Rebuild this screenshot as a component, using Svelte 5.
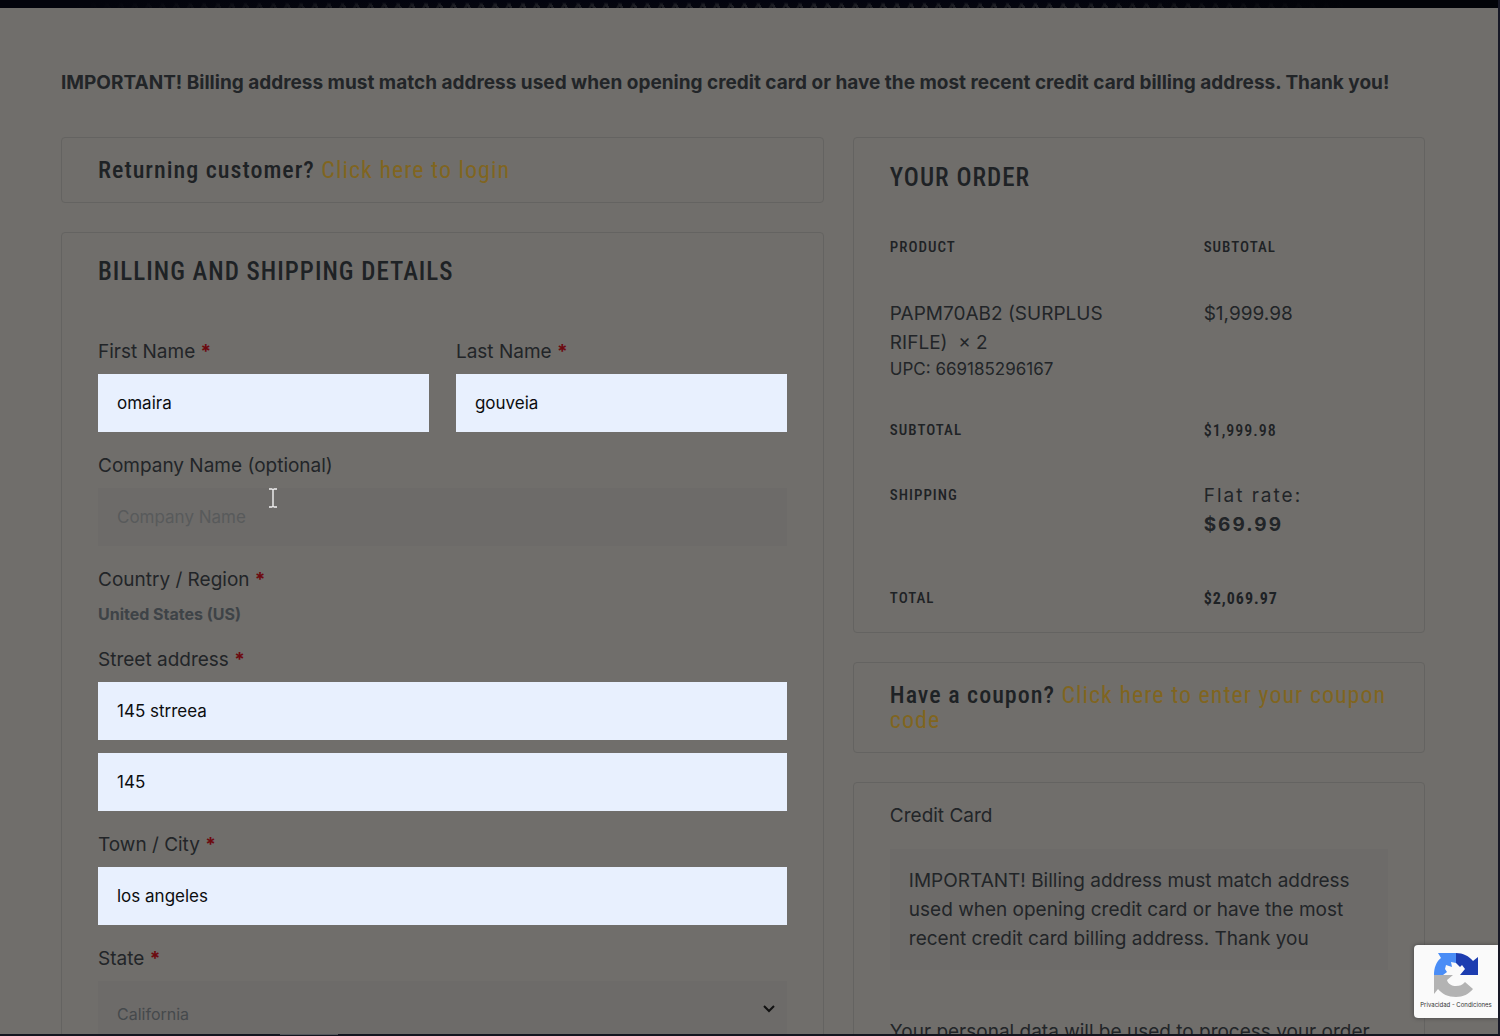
<script>
  let form = $state({
    firstName: "omaira",
    lastName: "gouveia",
    company: "",
    street: "145 strreea",
    street2: "145",
    city: "los angeles",
    region: "California",
  });

  const regions = ["Arizona", "California", "Nevada", "Oregon"];
</script>

<svelte:head>
  <title>Checkout</title>
</svelte:head>

<div class="window">
  <div class="banner"></div>

  <main>
    <p class="notice">
      IMPORTANT! Billing address must match address used when opening credit card or have the most recent credit card billing address. Thank you!
    </p>

    <div class="columns">
      <div class="column">
        <section class="card prompt">
          <h4>Returning customer? <a href="#login">Click here to login</a></h4>
        </section>

        <section class="card billing">
          <h3>Billing and Shipping details</h3>
          <form>
            <div class="pair">
              <div class="field">
                <label for="first">First Name <b>*</b></label>
                <input id="first" type="text" class="filled" bind:value={form.firstName} />
              </div>
              <div class="field">
                <label for="last">Last Name <b>*</b></label>
                <input id="last" type="text" class="filled" bind:value={form.lastName} />
              </div>
            </div>
            <div class="field">
              <label for="company">Company Name (optional)</label>
              <input id="company" type="text" placeholder="Company Name" bind:value={form.company} />
              <svg class="caret" viewBox="0 0 10 20" aria-hidden="true">
                <path d="M1 1h3.5M5.5 1H9M5 1v18M1 19h3.5M5.5 19H9" />
              </svg>
            </div>
            <div class="field">
              <span class="label">Country / Region <b>*</b></span>
              <strong class="country">United States (US)</strong>
            </div>
            <div class="field">
              <label for="street">Street address <b>*</b></label>
              <input id="street" type="text" class="filled" bind:value={form.street} />
              <input type="text" class="filled second" aria-label="Apartment, suite, unit" bind:value={form.street2} />
            </div>
            <div class="field">
              <label for="city">Town / City <b>*</b></label>
              <input id="city" type="text" class="filled" bind:value={form.city} />
            </div>
            <div class="field">
              <label for="region">State <b>*</b></label>
              <div class="select">
                <select id="region" bind:value={form.region}>
                  {#each regions as region}
                    <option>{region}</option>
                  {/each}
                </select>
                <svg class="chevron" viewBox="0 0 12 8" aria-hidden="true"><path d="M1 1l5 5 5-5" /></svg>
              </div>
            </div>
          </form>
        </section>
      </div>

      <div class="column">
        <section class="card order">
          <h3>Your order</h3>
          <table>
            <thead>
              <tr><th>Product</th><th>Subtotal</th></tr>
            </thead>
            <tbody>
              <tr class="product">
                <td>PAPM70AB2 (SURPLUS<br />RIFLE)&nbsp; × 2<small>UPC: 669185296167</small></td>
                <td>$1,999.98</td>
              </tr>
            </tbody>
            <tfoot>
              <tr><th>Subtotal</th><td class="amount">$1,999.98</td></tr>
              <tr class="shipping">
                <th>Shipping</th>
                <td>Flat rate:<br /><strong>$69.99</strong></td>
              </tr>
              <tr><th>Total</th><td class="amount"><strong>$2,069.97</strong></td></tr>
            </tfoot>
          </table>
        </section>

        <section class="card prompt">
          <h4>Have a coupon? <a href="#coupon">Click here to enter your coupon code</a></h4>
        </section>

        <section class="card payment">
          <p>Credit Card</p>
          <p class="box">
            IMPORTANT! Billing address must match address used when opening credit card or have the most recent credit card billing address. Thank you
          </p>
          <p>Your personal data will be used to process your order</p>
        </section>
      </div>
    </div>
  </main>

  <aside class="recaptcha">
    <svg viewBox="0 0 46 46" aria-hidden="true">
      <path fill="#4a8df6" d="M5 1h18v10l-5-1 1 5-6-2-1 4 2 3-4 3H1C1 16 3 10 8 6z" />
      <path fill="#1d3db0" d="M23 1c7 0 13 3 17 8l5-4v18H27l5-6-3-4-2 2-4-4z" />
      <path fill="#b3b3b3" d="M1 23h19l-6 5c1 4 5 6 9 6 4 0 6-1 9-4l8 7c-4 5-10 8-17 8-8 0-14-3-18-8l-4 5z" />
    </svg>
    <p>Privacidad - Condiciones</p>
  </aside>
</div>
<div class="taskbar"><span></span></div>

<style>
  :global(body) {
    margin: 0;
    background: #171826;
    overflow: hidden;
  }

  .window {
    position: relative;
    box-sizing: border-box;
    height: calc(100vh - 2px);
    margin-right: 2px;
    overflow: hidden;
    background: #706e6b;
    color: #222528;
    font-family: Inter, sans-serif;
    font-size: 19px;
    line-height: 29px;
  }

  .banner {
    height: 8px;
    background:
      linear-gradient(90deg, #03040c 5%, transparent 30%, transparent 70%, #020308 90%),
      linear-gradient(180deg, #03040f 2px, transparent 5px),
      repeating-linear-gradient(60deg, transparent 0 9px, #1f2026 10px 12px),
      repeating-linear-gradient(120deg, #04050e 0 9px, #18191f 10px 12px);
  }

  main {
    padding: 60px 73px 0 61px;
  }

  p {
    margin: 0;
  }

  .notice {
    font-weight: 700;
    white-space: nowrap;
    margin-bottom: 40px;
  }

  .columns {
    display: grid;
    grid-template-columns: minmax(0, 4fr) minmax(0, 3fr);
    gap: 29px;
    align-items: start;
  }

  .column {
    display: flex;
    flex-direction: column;
    gap: 29px;
  }

  .card {
    padding: 0 36px;
    border: 1px solid #646361;
    border-radius: 4px;
  }

  h3,
  h4,
  th,
  .amount {
    font-family: "Roboto Condensed", "Liberation Sans Narrow", "DejaVu Sans Condensed", sans-serif;
    font-weight: 500;
    color: #1e2225;
  }

  h3 {
    margin: 0;
    font-size: 25px;
    line-height: 36px;
    letter-spacing: 1px;
    text-transform: uppercase;
  }

  h4 {
    margin: 0;
    font-size: 24px;
    line-height: 25px;
    letter-spacing: 1px;
  }

  h4 a {
    color: #80651f;
    font-weight: 400;
    text-decoration: none;
  }

  .prompt {
    padding-top: 20px;
    padding-bottom: 19px;
  }

  .billing {
    padding-top: 21px;
    padding-bottom: 40px;
  }

  form {
    display: flex;
    flex-direction: column;
    gap: 19px;
    margin-top: 47px;
  }

  .pair {
    display: grid;
    grid-template-columns: 1fr 1fr;
    gap: 27px;
  }

  .field {
    position: relative;
    display: flex;
    flex-direction: column;
    gap: 8px;
  }

  .field b {
    color: #6d0a10;
  }

  input,
  select {
    box-sizing: border-box;
    width: 100%;
    height: 58px;
    padding: 0 19px;
    border: 0;
    border-radius: 0;
    background: #6d6b69;
    color: #45494c;
    font-family: Inter, sans-serif;
    font-size: 17px;
  }

  input::placeholder {
    color: #585a5b;
    opacity: 1;
  }

  .filled {
    background: #e8f0fe;
    color: #0c0d0f;
  }

  .second {
    margin-top: 5px;
  }

  .country {
    color: #3e4347;
    font-size: 16px;
    font-weight: 700;
    line-height: 24px;
  }

  .caret {
    position: absolute;
    left: 170px;
    top: 37px;
    width: 10px;
    height: 20px;
    fill: none;
    stroke: #f2f2f2;
    stroke-width: 1.4;
  }

  .select {
    position: relative;
  }

  select {
    appearance: none;
    padding-top: 8px;
    font-size: 16px;
  }

  .chevron {
    position: absolute;
    right: 12px;
    top: 24px;
    width: 12px;
    height: 8px;
    fill: none;
    stroke: #111;
    stroke-width: 2;
  }

  .order {
    padding-top: 22px;
    padding-bottom: 19px;
  }

  table {
    width: 100%;
    margin-top: 37px;
    border-collapse: collapse;
    table-layout: fixed;
  }

  th,
  td {
    padding: 0 0 36px;
    text-align: left;
    vertical-align: top;
  }

  thead th {
    padding-bottom: 37px;
  }

  th:first-child,
  td:first-child {
    width: 63%;
  }

  th,
  .amount {
    font-size: 15px;
    letter-spacing: 1px;
    text-transform: uppercase;
  }

  .amount {
    font-size: 16px;
  }

  small {
    display: block;
    font-size: 17px;
    line-height: 25px;
  }

  .product td {
    padding-bottom: 34px;
  }

  .shipping td {
    letter-spacing: 2px;
    padding-bottom: 45px;
  }

  tfoot tr:last-child > * {
    padding-bottom: 0;
  }

  .payment {
    padding-top: 18px;
    padding-bottom: 40px;
  }

  .box {
    margin: 19px 0 47px;
    padding: 17px 19px;
    background: #6d6b69;
  }

  .payment p:last-child {
    white-space: nowrap;
  }

  .recaptcha {
    position: absolute;
    right: 0;
    bottom: 16px;
    display: flex;
    flex-direction: column;
    align-items: center;
    width: 84px;
    height: 73px;
    background: #fafafa;
    border-radius: 4px 0 0 4px;
    box-shadow: 0 0 4px #444;
  }

  .recaptcha svg {
    width: 46px;
    height: 46px;
    margin-top: 7px;
  }

  .recaptcha p {
    color: #333;
    font-size: 6px;
    line-height: 14px;
    white-space: nowrap;
  }

  .taskbar {
    height: 2px;
    background: #14151f;
  }

  .taskbar span {
    display: block;
    width: 58px;
    height: 1px;
    margin-left: 280px;
    background: #55565c;
  }
</style>
